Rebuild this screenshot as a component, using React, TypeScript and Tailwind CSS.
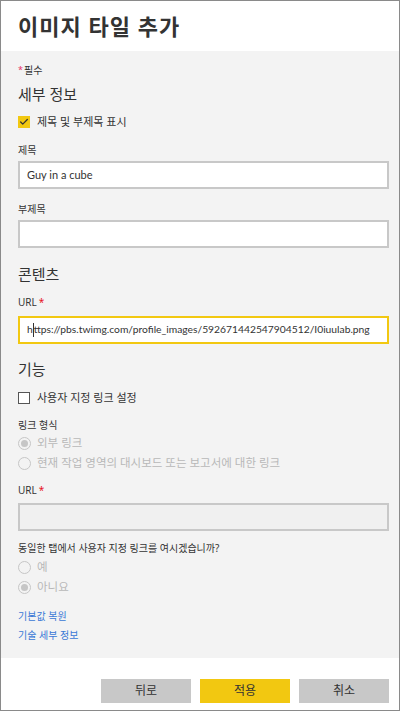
import { Check } from "lucide-react";

const font = "font-['Noto_Sans','Noto_Sans_CJK_KR',sans-serif]";

function Label({ children, required }: { children: React.ReactNode; required?: boolean }) {
    return (
        <div className="text-[10px] leading-[16px] text-[#333]">
            {children}
            {required && <span className="text-[#e81123] ml-[2px]">*</span>}
        </div>
    );
}

function SectionTitle({ children, className }: { children: React.ReactNode; className?: string }) {
    return <div className={"text-[15px] leading-[22px] text-[#333] " + (className ?? "")}>{children}</div>;
}

function Radio({ checked, children }: { checked?: boolean; children: React.ReactNode }) {
    return (
        <div className="flex items-center h-[20px] text-[11.5px] text-[#b8b8b8]">
            <span className="w-[13px] h-[13px] rounded-full border border-[#c6c6c6] flex items-center justify-center mr-[6px]">
                {checked && <span className="w-[7px] h-[7px] rounded-full bg-[#c6c6c6]" />}
            </span>
            {children}
        </div>
    );
}

export default function App() {
    return (
        <div className={"w-[400px] h-[711px] border border-[#8a8a8a] flex flex-col bg-white " + font}>
            <header className="h-[50px] bg-white flex items-center px-[17px]">
                <h1 className="text-[22px] font-semibold text-[#333] tracking-[1px]">이미지 타일 추가</h1>
            </header>

            <main className="flex-1 bg-[#f3f3f3] pl-[17px] pr-[10px] pt-[12px] flex flex-col">
                <div className="text-[10px] leading-[14px] text-[#333] flex items-start">
                    <span className="text-[#e8336b] text-[9px] mr-[1px]">*</span>필수
                </div>
                <SectionTitle className="mt-[6px]">세부 정보</SectionTitle>

                <div className="mt-[9px] flex items-center h-[16px] text-[11px] text-[#333]">
                    <span className="w-[12px] h-[12px] bg-[#f2c811] flex items-center justify-center mr-[7px]">
                        <Check size={10} strokeWidth={3} className="text-[#333]" />
                    </span>
                    제목 및 부제목 표시
                </div>

                <div className="mt-[12px]"><Label>제목</Label></div>
                <div className="mt-[3px] h-[28px] bg-white border-2 border-[#c8c8c8] flex items-center px-[7px] text-[11px] text-[#333] font-['Lato','Noto_Sans',sans-serif]">
                    Guy in a cube
                </div>

                <div className="mt-[12px]"><Label>부제목</Label></div>
                <div className="mt-[3px] h-[28px] bg-white border-2 border-[#c8c8c8]" />

                <SectionTitle className="mt-[15px]">콘텐츠</SectionTitle>
                <div className="mt-[9px]"><Label required>URL</Label></div>
                <div className="mt-[6px] h-[28px] bg-white border-2 border-[#f2c811] flex items-center px-[7px] text-[10.3px] text-[#333] whitespace-nowrap overflow-hidden font-['Lato','Noto_Sans',sans-serif]">
                    h<span className="inline-block w-px h-[14px] bg-[#333]" />ttps://pbs.twimg.com/profile_images/592671442547904512/I0iuulab.png
                </div>

                <SectionTitle className="mt-[14px]">기능</SectionTitle>
                <div className="mt-[10px] flex items-center h-[16px] text-[11px] text-[#333]">
                    <span className="w-[12px] h-[12px] bg-white border border-[#555] mr-[7px]" />
                    사용자 지정 링크 설정
                </div>

                <div className="mt-[11px]"><Label>링크 형식</Label></div>
                <Radio checked>외부 링크</Radio>
                <Radio>현재 작업 영역의 대시보드 또는 보고서에 대한 링크</Radio>

                <div className="mt-[9px]"><Label required>URL</Label></div>
                <div className="mt-[5px] h-[28px] bg-[#f0f0f0] border-2 border-[#c8c8c8]" />

                <div className="mt-[9px]"><Label>동일한 탭에서 사용자 지정 링크를 여시겠습니까?</Label></div>
                <div className="mt-[1px]">
                    <Radio>예</Radio>
                    <Radio checked>아니요</Radio>
                </div>

                <a className="mt-[11px] text-[10px] leading-[16px] text-[#3a78d6]">기본값 복원</a>
                <a className="mt-[3px] text-[10px] leading-[16px] text-[#3a78d6]">기술 세부 정보</a>
            </main>

            <footer className="h-[52px] bg-white flex justify-end items-start gap-[9px] pt-[21px] pr-[10px]">
                <button className="w-[90px] h-[24px] bg-[#c8c8c8] text-[12px] text-[#333]">뒤로</button>
                <button className="w-[90px] h-[24px] bg-[#f2c811] text-[12px] text-[#333]">적용</button>
                <button className="w-[90px] h-[24px] bg-[#c8c8c8] text-[12px] text-[#333]">취소</button>
            </footer>
        </div>
    );
}
